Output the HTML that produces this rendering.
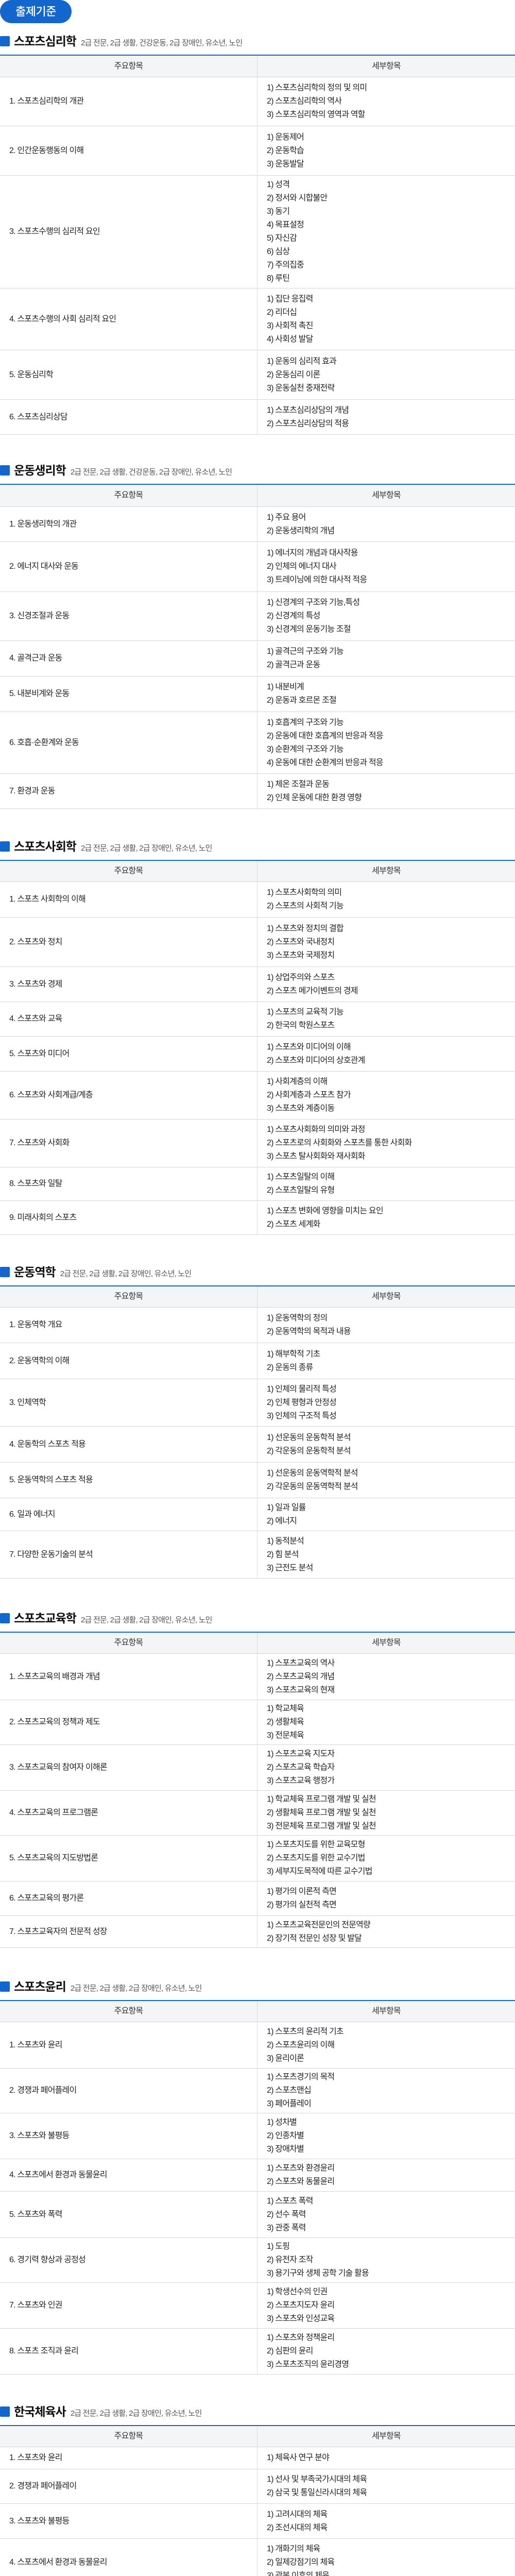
<!DOCTYPE html>
<html lang="ko">
<head>
<meta charset="utf-8">
<style>
*{box-sizing:border-box;margin:0;padding:0}
html,body{width:1000px;height:5022px;background:#fff;overflow:hidden}
body{position:relative;font-family:"Liberation Sans","Noto Sans CJK KR",sans-serif;color:#222}
.badge{position:absolute;left:0;top:0;width:139px;height:45px;border-radius:23px;background:#1466cf;color:#fff;font-size:22px;font-weight:500;line-height:45px;text-align:center;letter-spacing:-0.5px;overflow:hidden}
.sec{position:absolute;left:0;width:1000px}
.sec h3{height:40px;line-height:40px;margin-bottom:6px;font-size:23px;font-weight:700;color:#111;position:relative;padding-left:27px;white-space:nowrap;letter-spacing:-1px;overflow:hidden}
.sec h3:before{content:"";position:absolute;left:0;top:10px;width:19px;height:20px;background:#1466cf;border-radius:2px}
.sec h3 span{font-size:15px;font-weight:400;color:#555;margin-left:9px;letter-spacing:-0.8px}
.tb{border-top:2px solid #1466c6;width:1000px}
.r{display:flex;border-bottom:1px solid #d6d6d6;overflow:hidden}
.r>div{display:flex;flex-direction:column;justify-content:center;font-size:16px;letter-spacing:-0.8px;overflow:hidden}
.r>div:first-child{width:500px;border-right:1px solid #dcdcdc;padding-left:18px}
.r>div:last-child{width:500px;padding-left:18px}
.h{background:#f4f5f7;color:#333}
.h>div{align-items:center;padding-left:0 !important}
p{display:block;height:26px;line-height:26px;white-space:nowrap}
</style>
</head>
<body>
<div class="badge">출제기준</div>

<div class="sec" style="top:60px">
<h3>스포츠심리학<span>2급 전문, 2급 생활, 건강운동, 2급 장애인, 유소년, 노인</span></h3>
<div class="tb">
<div class="r h" style="height:42px"><div><p>주요항목</p></div><div><p>세부항목</p></div></div>
<div class="r" style="height:95px"><div><p>1. 스포츠심리학의 개관</p></div><div><p>1) 스포츠심리학의 정의 및 의미</p><p>2) 스포츠심리학의 역사</p><p>3) 스포츠심리학의 영역과 역할</p></div></div>
<div class="r" style="height:96px"><div><p>2. 인간운동행동의 이해</p></div><div><p>1) 운동제어</p><p>2) 운동학습</p><p>3) 운동발달</p></div></div>
<div class="r" style="height:219px"><div><p>3. 스포츠수행의 심리적 요인</p></div><div><p>1) 성격</p><p>2) 정서와 시합불안</p><p>3) 동기</p><p>4) 목표설정</p><p>5) 자신감</p><p>6) 심상</p><p>7) 주의집중</p><p>8) 루틴</p></div></div>
<div class="r" style="height:120px"><div><p>4. 스포츠수행의 사회 심리적 요인</p></div><div><p>1) 집단 응집력</p><p>2) 리더십</p><p>3) 사회적 촉진</p><p>4) 사회성 발달</p></div></div>
<div class="r" style="height:96px"><div><p>5. 운동심리학</p></div><div><p>1) 운동의 심리적 효과</p><p>2) 운동심리 이론</p><p>3) 운동실천 중재전략</p></div></div>
<div class="r" style="height:68px"><div><p>6. 스포츠심리상담</p></div><div><p>1) 스포츠심리상담의 개념</p><p>2) 스포츠심리상담의 적용</p></div></div>
</div>
</div>

<div class="sec" style="top:893px">
<h3>운동생리학<span>2급 전문, 2급 생활, 건강운동, 2급 장애인, 유소년, 노인</span></h3>
<div class="tb">
<div class="r h" style="height:43px"><div><p>주요항목</p></div><div><p>세부항목</p></div></div>
<div class="r" style="height:68px"><div><p>1. 운동생리학의 개관</p></div><div><p>1) 주요 용어</p><p>2) 운동생리학의 개념</p></div></div>
<div class="r" style="height:97px"><div><p>2. 에너지 대사와 운동</p></div><div><p>1) 에너지의 개념과 대사작용</p><p>2) 인체의 에너지 대사</p><p>3) 트레이닝에 의한 대사적 적응</p></div></div>
<div class="r" style="height:95px"><div><p>3. 신경조절과 운동</p></div><div><p>1) 신경계의 구조와 기능,특성</p><p>2) 신경계의 특성</p><p>3) 신경계의 운동기능 조절</p></div></div>
<div class="r" style="height:69px"><div><p>4. 골격근과 운동</p></div><div><p>1) 골격근의 구조와 기능</p><p>2) 골격근과 운동</p></div></div>
<div class="r" style="height:69px"><div><p>5. 내분비계와 운동</p></div><div><p>1) 내분비계</p><p>2) 운동과 호르몬 조절</p></div></div>
<div class="r" style="height:120px"><div><p>6. 호흡·순환계와 운동</p></div><div><p>1) 호흡계의 구조와 기능</p><p>2) 운동에 대한 호흡계의 반응과 적응</p><p>3) 순환계의 구조와 기능</p><p>4) 운동에 대한 순환계의 반응과 적응</p></div></div>
<div class="r" style="height:68px"><div><p>7. 환경과 운동</p></div><div><p>1) 체온 조절과 운동</p><p>2) 인체 운동에 대한 환경 영향</p></div></div>
</div>
</div>

<div class="sec" style="top:1623px">
<h3>스포츠사회학<span>2급 전문, 2급 생활, 2급 장애인, 유소년, 노인</span></h3>
<div class="tb">
<div class="r h" style="height:41px"><div><p>주요항목</p></div><div><p>세부항목</p></div></div>
<div class="r" style="height:69px"><div><p>1. 스포츠 사회학의 이해</p></div><div><p>1) 스포츠사회학의 의미</p><p>2) 스포츠의 사회적 기능</p></div></div>
<div class="r" style="height:96px"><div><p>2. 스포츠와 정치</p></div><div><p>1) 스포츠와 정치의 결합</p><p>2) 스포츠와 국내정치</p><p>3) 스포츠와 국제정치</p></div></div>
<div class="r" style="height:68px"><div><p>3. 스포츠와 경제</p></div><div><p>1) 상업주의와 스포츠</p><p>2) 스포츠 메가이벤트의 경제</p></div></div>
<div class="r" style="height:67px"><div><p>4. 스포츠와 교육</p></div><div><p>1) 스포츠의 교육적 기능</p><p>2) 한국의 학원스포츠</p></div></div>
<div class="r" style="height:68px"><div><p>5. 스포츠와 미디어</p></div><div><p>1) 스포츠와 미디어의 이해</p><p>2) 스포츠와 미디어의 상호관계</p></div></div>
<div class="r" style="height:93px"><div><p>6. 스포츠와 사회계급/계층</p></div><div><p>1) 사회계층의 이해</p><p>2) 사회계층과 스포츠 참가</p><p>3) 스포츠와 계층이동</p></div></div>
<div class="r" style="height:93px"><div><p>7. 스포츠와 사회화</p></div><div><p>1) 스포츠사회화의 의미와 과정</p><p>2) 스포츠로의 사회화와 스포츠를 통한 사회화</p><p>3) 스포츠 탈사회화와 재사회화</p></div></div>
<div class="r" style="height:65px"><div><p>8. 스포츠와 일탈</p></div><div><p>1) 스포츠일탈의 이해</p><p>2) 스포츠일탈의 유형</p></div></div>
<div class="r" style="height:66px"><div><p>9. 미래사회의 스포츠</p></div><div><p>1) 스포츠 변화에 영향을 미치는 요인</p><p>2) 스포츠 세계화</p></div></div>
</div>
</div>

<div class="sec" style="top:2449px">
<h3>운동역학<span>2급 전문, 2급 생활, 2급 장애인, 유소년, 노인</span></h3>
<div class="tb">
<div class="r h" style="height:41px"><div><p>주요항목</p></div><div><p>세부항목</p></div></div>
<div class="r" style="height:69px"><div><p>1. 운동역학 개요</p></div><div><p>1) 운동역학의 정의</p><p>2) 운동역학의 목적과 내용</p></div></div>
<div class="r" style="height:70px"><div><p>2. 운동역학의 이해</p></div><div><p>1) 해부학적 기초</p><p>2) 운동의 종류</p></div></div>
<div class="r" style="height:92px"><div><p>3. 인체역학</p></div><div><p>1) 인체의 물리적 특성</p><p>2) 인체 평형과 안정성</p><p>3) 인체의 구조적 특성</p></div></div>
<div class="r" style="height:70px"><div><p>4. 운동학의 스포츠 적용</p></div><div><p>1) 선운동의 운동학적 분석</p><p>2) 각운동의 운동학적 분석</p></div></div>
<div class="r" style="height:69px"><div><p>5. 운동역학의 스포츠 적용</p></div><div><p>1) 선운동의 운동역학적 분석</p><p>2) 각운동의 운동역학적 분석</p></div></div>
<div class="r" style="height:64px"><div><p>6. 일과 에너지</p></div><div><p>1) 일과 일률</p><p>2) 에너지</p></div></div>
<div class="r" style="height:92px"><div><p>7. 다양한 운동기술의 분석</p></div><div><p>1) 동적분석</p><p>2) 힘 분석</p><p>3) 근전도 분석</p></div></div>
</div>
</div>

<div class="sec" style="top:3121px">
<h3>스포츠교육학<span>2급 전문, 2급 생활, 2급 장애인, 유소년, 노인</span></h3>
<div class="tb">
<div class="r h" style="height:41px"><div><p>주요항목</p></div><div><p>세부항목</p></div></div>
<div class="r" style="height:90px"><div><p>1. 스포츠교육의 배경과 개념</p></div><div><p>1) 스포츠교육의 역사</p><p>2) 스포츠교육의 개념</p><p>3) 스포츠교육의 현재</p></div></div>
<div class="r" style="height:87px"><div><p>2. 스포츠교육의 정책과 제도</p></div><div><p>1) 학교체육</p><p>2) 생활체육</p><p>3) 전문체육</p></div></div>
<div class="r" style="height:89px"><div><p>3. 스포츠교육의 참여자 이해론</p></div><div><p>1) 스포츠교육 지도자</p><p>2) 스포츠교육 학습자</p><p>3) 스포츠교육 행정가</p></div></div>
<div class="r" style="height:87px"><div><p>4. 스포츠교육의 프로그램론</p></div><div><p>1) 학교체육 프로그램 개발 및 실천</p><p>2) 생활체육 프로그램 개발 및 실천</p><p>3) 전문체육 프로그램 개발 및 실천</p></div></div>
<div class="r" style="height:89px"><div><p>5. 스포츠교육의 지도방법론</p></div><div><p>1) 스포츠지도를 위한 교육모형</p><p>2) 스포츠지도를 위한 교수기법</p><p>3) 세부지도목적에 따른 교수기법</p></div></div>
<div class="r" style="height:67px"><div><p>6. 스포츠교육의 평가론</p></div><div><p>1) 평가의 이론적 측면</p><p>2) 평가의 실천적 측면</p></div></div>
<div class="r" style="height:62px"><div><p>7. 스포츠교육자의 전문적 성장</p></div><div><p>1) 스포츠교육전문인의 전문역량</p><p>2) 장기적 전문인 성장 및 발달</p></div></div>
</div>
</div>

<div class="sec" style="top:3836px">
<h3>스포츠윤리<span>2급 전문, 2급 생활, 2급 장애인, 유소년, 노인</span></h3>
<div class="tb">
<div class="r h" style="height:41px"><div><p>주요항목</p></div><div><p>세부항목</p></div></div>
<div class="r" style="height:90px"><div><p>1. 스포츠와 윤리</p></div><div><p>1) 스포츠의 윤리적 기초</p><p>2) 스포츠윤리의 이해</p><p>3) 윤리이론</p></div></div>
<div class="r" style="height:87px"><div><p>2. 경쟁과 페어플레이</p></div><div><p>1) 스포츠경기의 목적</p><p>2) 스포츠맨십</p><p>3) 페어플레이</p></div></div>
<div class="r" style="height:89px"><div><p>3. 스포츠와 불평등</p></div><div><p>1) 성차별</p><p>2) 인종차별</p><p>3) 장애차별</p></div></div>
<div class="r" style="height:63px"><div><p>4. 스포츠에서 환경과 동물윤리</p></div><div><p>1) 스포츠와 환경윤리</p><p>2) 스포츠와 동물윤리</p></div></div>
<div class="r" style="height:90px"><div><p>5. 스포츠와 폭력</p></div><div><p>1) 스포츠 폭력</p><p>2) 선수 폭력</p><p>3) 관중 폭력</p></div></div>
<div class="r" style="height:87px"><div><p>6. 경기력 향상과 공정성</p></div><div><p>1) 도핑</p><p>2) 유전자 조작</p><p>3) 용기구와 생체 공학 기술 활용</p></div></div>
<div class="r" style="height:89px"><div><p>7. 스포츠와 인권</p></div><div><p>1) 학생선수의 인권</p><p>2) 스포츠지도자 윤리</p><p>3) 스포츠와 인성교육</p></div></div>
<div class="r" style="height:89px"><div><p>8. 스포츠 조직과 윤리</p></div><div><p>1) 스포츠와 정책윤리</p><p>2) 심판의 윤리</p><p>3) 스포츠조직의 윤리경영</p></div></div>
</div>
</div>

<div class="sec" style="top:4661px">
<h3>한국체육사<span>2급 전문, 2급 생활, 2급 장애인, 유소년, 노인</span></h3>
<div class="tb">
<div class="r h" style="height:41px"><div><p>주요항목</p></div><div><p>세부항목</p></div></div>
<div class="r" style="height:43px"><div><p>1. 스포츠와 윤리</p></div><div><p>1) 체육사 연구 분야</p></div></div>
<div class="r" style="height:67px"><div><p>2. 경쟁과 페어플레이</p></div><div><p>1) 선사 및 부족국가시대의 체육</p><p>2) 삼국 및 통일신라시대의 체육</p></div></div>
<div class="r" style="height:68px"><div><p>3. 스포츠와 불평등</p></div><div><p>1) 고려시대의 체육</p><p>2) 조선시대의 체육</p></div></div>
<div class="r" style="height:92px"><div><p>4. 스포츠에서 환경과 동물윤리</p></div><div><p>1) 개화기의 체육</p><p>2) 일제강점기의 체육</p><p>3) 광복 이후의 체육</p></div></div>
</div>
</div>
</body>
</html>
